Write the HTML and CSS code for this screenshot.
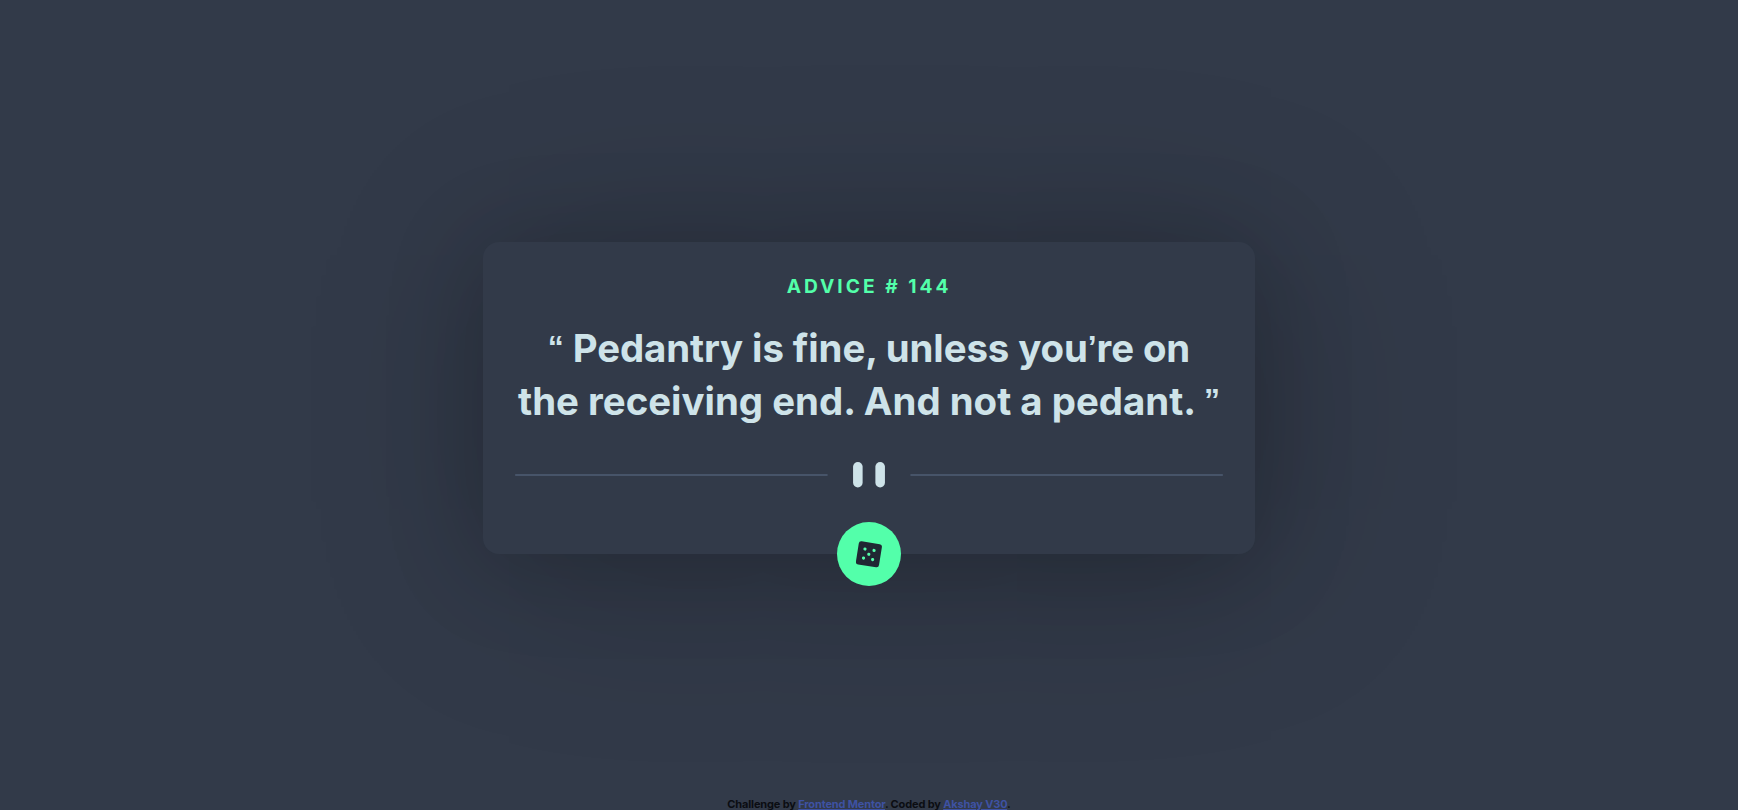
FILE: index.html
```html
<!DOCTYPE html>
<html lang="en">
<head>
<meta charset="utf-8">
<title>Advice generator</title>
<link rel="stylesheet" href="styles.css">
</head>
<body>
<main class="stage">
  <section class="card">
    <h1 class="label">Advice # 144</h1>
    <p class="quote"><span class="line-one"><span class="mark">“</span> Pedantry is fine, unless you<span class="mark">’</span>re on</span><br><span class="line-two">the receiving end. And not a pedant. <span class="mark">”</span></span></p>
    <svg class="divider" viewBox="0 0 444 16" aria-hidden="true">
      <path fill="#4f5d74" d="M0 7.7h196v1H0zM248 7.7h196v1H248z"/>
      <g fill="#cee3e9"><rect x="212" width="6" height="16" rx="3"/><rect x="226" width="6" height="16" rx="3"/></g>
    </svg>
    <button class="dice" aria-label="New advice">
      <svg width="27" height="27" viewBox="0 0 27 27" aria-hidden="true">
        <g transform="translate(-.6 -.2) rotate(9 13.5 13.5)">
          <rect x="1.8" y="1.8" width="23.4" height="23.4" rx="2.6" fill="#202733"/>
          <g fill="#53ffaa"><circle cx="8.8" cy="8.9" r="1.6"/><circle cx="18" cy="8.9" r="1.6"/><circle cx="13.4" cy="13.5" r="1.6"/><circle cx="8.8" cy="18.1" r="1.6"/><circle cx="18" cy="18.1" r="1.6"/></g>
        </g>
      </svg>
    </button>
  </section>
</main>
<footer class="attribution">Challenge by <a href="#">Frontend Mentor</a>. Coded by <a href="#">Akshay V30</a>.</footer>
</body>
</html>
```
FILE: styles.css
```css
* { box-sizing: border-box; }
body {
  margin: 0;
  height: 810px;
  overflow: hidden;
  display: flex;
  flex-direction: column;
  background: #323a49;
  font-family: Inter, "Liberation Sans", sans-serif;
}
.stage {
  height: 796px;
  flex: none;
  display: flex;
  justify-content: center;
  align-items: center;
}
.card {
  position: relative;
  width: 772px;
  height: 312px;
  padding: 31px 32px 32px;
  border-radius: 16px;
  background: #323a49;
  box-shadow: 15px 16px 200px rgba(0, 0, 0, .2), 0 8px 100px rgba(0, 0, 0, .2);
  text-align: center;
}
.label {
  margin: 0;
  font-size: 19.2px;
  line-height: 26px;
  font-weight: 700;
  letter-spacing: 3px;
  text-transform: uppercase;
  color: #53ffaa;
}
.quote {
  margin: 23px 0 0;
  font-size: 38.4px;
  line-height: 53px;
  font-weight: 700;
  color: #cee3e9;
  white-space: nowrap;
}
.line-one { letter-spacing: -.1px; }
.line-two { letter-spacing: 0; }
.mark {
  font-family: "Liberation Sans", sans-serif;
  font-size: 32px;
  line-height: 0;
  vertical-align: 4px;
}
.divider {
  display: block;
  width: 708px;
  height: 25.5px;
  margin-top: 34px;
}
.dice {
  position: absolute;
  left: 354px;
  bottom: -32px;
  width: 64px;
  height: 64px;
  padding: 0;
  border: 0;
  border-radius: 50%;
  background: #53ffaa;
  display: flex;
  align-items: center;
  justify-content: center;
}
.attribution {
  flex: none;
  padding-top: 1px;
  font-size: 11px;
  line-height: 15px;
  font-weight: 700;
  letter-spacing: -.15px;
  text-align: center;
  color: #0b0d12;
}
.attribution a { color: #3e52a3; }
```
